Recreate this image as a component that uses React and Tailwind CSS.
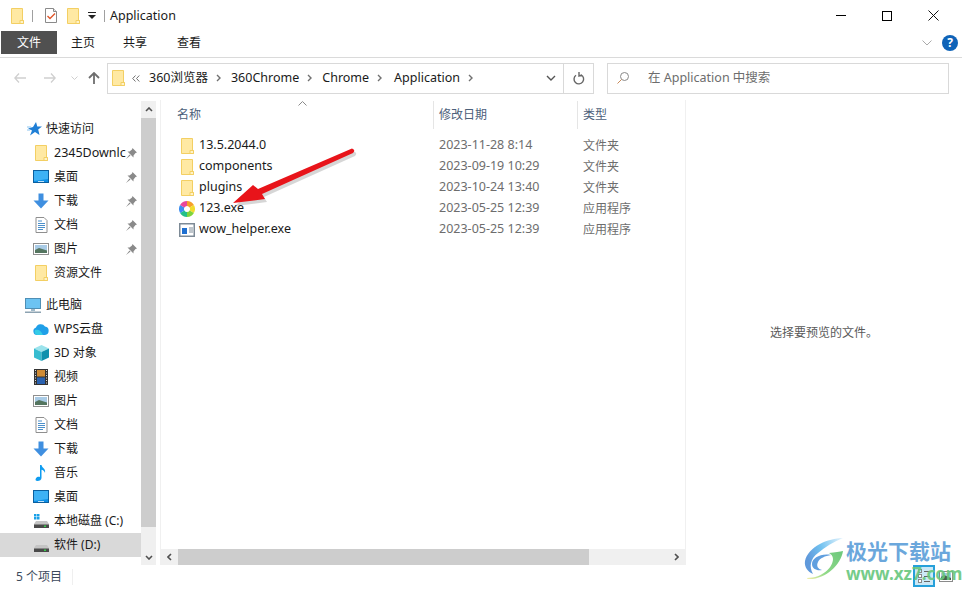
import React from 'react';

const FONT = '"Noto Sans", "Noto Sans CJK SC", sans-serif';

function FolderIcon({ className = 'w-[14px] h-[17px]' }) {
  return (
    <svg viewBox="0 0 13 16" className={className}>
      <path d="M.5.5h11v12h1v3H.5z" fill="#ffe9a3" stroke="#f3cf63" />
      <path d="M9 12.500h3.500v3H9z" fill="#fff3c8" stroke="#f3cf63" />
    </svg>
  );
}

function CheckDoc() {
  return (
    <svg viewBox="0 0 14 17" className="w-[14px] h-[17px]">
      <path d="M1.500 1.500h8l3 3v11h-11z" fill="#fff" stroke="#8a8a8a" />
      <path d="M9.500 1.500v3h3" fill="#e8e8e8" stroke="#8a8a8a" />
      <path d="M3.500 9l2.500 2.500 5-5" fill="none" stroke="#e0562a" strokeWidth="1.400" />
    </svg>
  );
}

function Monitor() {
  return (
    <svg viewBox="0 0 16 14" className="w-4 h-[14px]">
      <rect x="0.500" y="0.500" width="15" height="12" fill="#0d8fe6" stroke="#0b5f9e" />
      <path d="M1 1h14v8L1 11z" fill="#3eb2f5" />
      <rect x="5" y="11" width="6" height="1" fill="#bfe3fa" />
    </svg>
  );
}

function DownArrow() {
  return (
    <svg viewBox="0 0 16 16" className="w-4 h-4">
      <path d="M5.500 0.500h5v7h5L8 15.500 0.500 7.500h5z" fill="#3f8fe0" />
    </svg>
  );
}

function DocIcon() {
  return (
    <svg viewBox="0 0 13 16" className="w-[13px] h-4">
      <path d="M1 .5h8l3 3v12H1z" fill="#fff" stroke="#8f8f8f" />
      <path d="M3 4h4M3 6.500h7M3 8.500h7M3 10.500h7M3 12.500h5" stroke="#4b8fca" />
    </svg>
  );
}

function PictureIcon() {
  return (
    <svg viewBox="0 0 16 12" className="w-4 h-3">
      <rect x=".5" y=".5" width="15" height="11" fill="#fff" stroke="#8f8f8f" />
      <rect x="2" y="2" width="12" height="8" fill="#a9cbe6" />
      <path d="M2 7l4-2 8 2.500V10H2z" fill="#54755f" />
    </svg>
  );
}

function FilmIcon() {
  return (
    <svg viewBox="0 0 14 16" className="w-[14px] h-4">
      <rect width="14" height="16" fill="#333" />
      <rect x="3" y="1" width="8" height="6.500" fill="#cf8b35" />
      <rect x="3" y="8.500" width="8" height="6.500" fill="#2a62b0" />
      <path d="M1 1.500h1M1 4h1M1 6.500h1M1 9h1M1 11.500h1M1 14h1M12 1.500h1M12 4h1M12 6.500h1M12 9h1M12 11.500h1M12 14h1" stroke="#ddd" />
    </svg>
  );
}

function MusicIcon() {
  return (
    <svg viewBox="0 0 12 16" className="w-3 h-4">
      <path d="M5 0h1.500c.5 3 4.500 3.500 3.500 8-.5-2-2-3-3.500-3.300V13c0 2-2 3-4 3S0 14.500 1 13.200 3.500 11.500 5 12z" fill="#0e9cf0" />
    </svg>
  );
}

function DriveIcon({ win }) {
  return (
    <svg viewBox="0 0 15 14" className="w-[15px] h-[14px]">
      {win && <path d="M0 0h2.500v2.500H0zM3 0h2.500v2.500H3zM0 3h2.500v2.500H0zM3 3h2.500v2.500H3z" fill="#19a0e8" />}
      <path d="M2 7h11l2 3v4H0v-4z" fill="#c4c4c4" />
      <rect y="10.500" width="15" height="3.500" fill="#4a4a4a" />
      <rect x="10" y="11.500" width="2" height="1.500" fill="#35d04a" />
    </svg>
  );
}

function CloudIcon() {
  return (
    <svg viewBox="0 0 16 12" className="w-4 h-3">
      <path d="M4 12a3.800 3.800 0 0 1-1-7.400A5 5 0 0 1 12 3.500 4.300 4.300 0 0 1 12 12z" fill="#1f9fe8" />
      <path d="M2 7c3-1 6 0 8 5H4a3.800 3.800 0 0 1-2-5z" fill="#35cbe6" />
    </svg>
  );
}

function CubeIcon() {
  return (
    <svg viewBox="0 0 15 16" className="w-[15px] h-4">
      <path d="M7.500 0L15 3.500 7.500 7 0 3.500z" fill="#9be3ec" />
      <path d="M0 3.500L7.500 7v9L0 12.500z" fill="#37bcd0" />
      <path d="M15 3.500L7.500 7v9l7.500-3.500z" fill="#1090ad" />
    </svg>
  );
}

function Pin() {
  return (
    <svg viewBox="0 0 11 11" className="w-[11px] h-[11px] shrink-0">
      <path d="M6.500 0L11 4.500 9.500 5 7.500 7.500 7.500 9.500 1.500 3.500 3.500 3.500 6 1.500zM3.500 6.500L0 11l4.500-3.500z" fill="#8a8a8a" />
    </svg>
  );
}

function StarIcon() {
  return (
    <svg viewBox="0 0 15 14" className="w-[15px] h-[14px]">
      <path d="M9 0l1.300 4.500H15l-3.800 3 1.300 5.500L8 10 3 13.500 5 8.500 1 6.500 6 5z" fill="#1f7fd6" />
      <path d="M0 5h4M0 8h3" stroke="#8cc4ef" />
    </svg>
  );
}

function ComputerIcon() {
  return (
    <svg viewBox="0 0 16 15" className="w-4 h-[15px]">
      <rect x=".5" y=".5" width="15" height="10" fill="#6cc3f2" stroke="#4f8fb5" />
      <rect x="6" y="11" width="4" height="2" fill="#9fb8c8" />
      <rect y="13.500" width="16" height="1.500" fill="#8da3b2" />
    </svg>
  );
}

const quickAccess = [
  { label: '2345Downlc', icon: <FolderIcon className="w-[13px] h-[16px]" />, pin: true, latin: true },
  { label: '桌面', icon: <Monitor />, pin: true },
  { label: '下载', icon: <DownArrow />, pin: true },
  { label: '文档', icon: <DocIcon />, pin: true },
  { label: '图片', icon: <PictureIcon />, pin: true },
  { label: '资源文件', icon: <FolderIcon className="w-[13px] h-[16px]" /> },
];

const thisPc = [
  { label: 'WPS云盘', icon: <CloudIcon /> },
  { label: '3D 对象', icon: <CubeIcon /> },
  { label: '视频', icon: <FilmIcon /> },
  { label: '图片', icon: <PictureIcon /> },
  { label: '文档', icon: <DocIcon /> },
  { label: '下载', icon: <DownArrow /> },
  { label: '音乐', icon: <MusicIcon /> },
  { label: '桌面', icon: <Monitor /> },
  { label: '本地磁盘 (C:)', icon: <DriveIcon win /> },
  { label: '软件 (D:)', icon: <DriveIcon />, selected: true },
];

const files = [
  { name: '13.5.2044.0', date: '2023-11-28 8:14', type: '文件夹', kind: 'folder' },
  { name: 'components', date: '2023-09-19 10:29', type: '文件夹', kind: 'folder' },
  { name: 'plugins', date: '2023-10-24 13:40', type: '文件夹', kind: 'folder' },
  { name: '123.exe', date: '2023-05-25 12:39', type: '应用程序', kind: 'color' },
  { name: 'wow_helper.exe', date: '2023-05-25 12:39', type: '应用程序', kind: 'app' },
];

function NavRow({ item }) {
  return (
    <div className={`h-6 flex items-center ${item.selected ? 'bg-[#d9d9d9]' : ''}`}>
      <div className="w-[33px] shrink-0" />
      <div className="w-[16px] flex justify-center shrink-0">{item.icon}</div>
      <div className={`ml-[5px] w-[72px] shrink-0 whitespace-nowrap overflow-hidden text-[#1a1a1a] ${item.latin ? 'text-[12.5px]' : 'text-[12px]'}`}>
        {item.label}
      </div>
      {item.pin && <Pin />}
    </div>
  );
}

function FileIcon({ kind }) {
  if (kind === 'folder') return <FolderIcon className="w-[13px] h-[16px]" />;
  if (kind === 'color') {
    return (
      <svg viewBox="0 0 16 16" className="w-4 h-4">
        <path d="M8 0a8 8 0 0 1 6.900 4L10.600 6.500A3 3 0 0 0 8 5z" fill="#f5a02a" />
        <path d="M14.900 4a8 8 0 0 1 0 8l-4.300-2.500a3 3 0 0 0 0-3z" fill="#f2dc2e" />
        <path d="M14.900 12A8 8 0 0 1 8 16v-5a3 3 0 0 0 2.600-1.500z" fill="#7fd43a" />
        <path d="M8 16a8 8 0 0 1-6.900-4l4.300-2.500A3 3 0 0 0 8 11z" fill="#22c08a" />
        <path d="M1.100 12a8 8 0 0 1 0-8l4.300 2.500a3 3 0 0 0 0 3z" fill="#3c8df0" />
        <path d="M1.100 4A8 8 0 0 1 8 0v5a3 3 0 0 0-2.600 1.500z" fill="#e8479c" />
      </svg>
    );
  }
  return (
    <svg viewBox="0 0 16 14" className="w-4 h-[14px]">
      <rect x=".75" y=".75" width="14.500" height="12.500" fill="#fff" stroke="#7d8a96" strokeWidth="1.500" />
      <rect x="3" y="5" width="5" height="6" fill="#1f6fd0" />
      <path d="M10 5h4M10 7h4M10 9h4" stroke="#7f8c98" />
    </svg>
  );
}

function Chevron({ className = '' }) {
  return (
    <svg viewBox="0 0 5 8" className={`w-[5px] h-2 shrink-0 ${className}`}>
      <path d="M1 1l3 3-3 3" fill="none" stroke="#707070" strokeWidth="1.400" />
    </svg>
  );
}

function ViewRow() {
  return (
    <div className="flex items-center gap-[2px]">
      <div className="w-[4px] h-[4px] border border-[#888] bg-white" />
      <div className="flex-1 border-t border-dashed border-[#666]" />
    </div>
  );
}

export default function App() {
  return (
    <div className="relative w-[962px] h-[589px] bg-white flex flex-col overflow-hidden text-[12px] text-[#1a1a1a]" style={{ fontFamily: FONT }}>
      {/* title bar */}
      <div className="h-[31px] flex items-center shrink-0">
        <div className="ml-[11px] flex items-center">
          <FolderIcon className="w-[13px] h-[16px]" />
          <div className="ml-[8px] w-px h-3 bg-[#a0a0a0]" />
          <div className="ml-[11px]"><CheckDoc /></div>
          <div className="ml-[9px]"><FolderIcon className="w-[13px] h-[16px]" /></div>
          <svg viewBox="0 0 8 7" className="ml-[8px] w-2 h-[7px]"><path d="M0 0h8v1H0zM0 3h8L4 7z" fill="#222" /></svg>
          <div className="ml-[8px] w-px h-3 bg-[#a0a0a0]" />
        </div>
        <span className="ml-[5px] pt-px text-[12.5px]">Application</span>
        <div className="ml-auto flex items-center">
          <div className="w-[46px] flex justify-center"><div className="w-[10px] h-px bg-black" /></div>
          <div className="w-[46px] flex justify-center"><div className="w-[10px] h-[10px] border border-black" /></div>
          <div className="w-[46px] flex justify-center mr-[6px]">
            <svg viewBox="0 0 11 11" className="w-[11px] h-[11px]"><path d="M.5.5l10 10M10.500.500l-10 10" stroke="#111" /></svg>
          </div>
        </div>
      </div>

      {/* ribbon tabs */}
      <div className="h-[27px] shrink-0 flex items-start border-b border-[#dadada] text-[12px]">
        <div className="ml-px w-[56px] h-[23px] pt-px bg-[#505050] text-white flex items-center justify-center">文件</div>
        <div className="w-[53px] ml-[-13px] pl-[27px] h-[23px] pt-px flex items-center whitespace-nowrap">主页</div>
        <div className="ml-[26px] w-[53px] h-[23px] pt-px flex items-center">共享</div>
        <div className="ml-px h-[23px] pt-px flex items-center">查看</div>
        <div className="ml-auto h-[23px] flex items-center mr-[4px]">
          <svg viewBox="0 0 10 6" className="w-[10px] h-[6px] mr-[10px]"><path d="M.5.5L5 5 9.500.5" fill="none" stroke="#aaa" /></svg>
          <div className="w-4 h-4 rounded-full bg-[#0f63b8] text-white text-[12px] font-bold flex items-center justify-center">?</div>
        </div>
      </div>

      {/* address row */}
      <div className="h-[42px] shrink-0 flex items-center pb-[2px]">
        <div className="w-[107px] shrink-0 flex items-center pl-[14px]">
          <svg viewBox="0 0 12 10" className="w-3 h-[10px]"><path d="M5 .5L.8 5 5 9.500M1 5h11" fill="none" stroke="#cfcfcf" strokeWidth="1.300" /></svg>
          <svg viewBox="0 0 12 10" className="ml-[18px] w-3 h-[10px]"><path d="M7 .5L11.200 5 7 9.500M11 5H0" fill="none" stroke="#cfcfcf" strokeWidth="1.300" /></svg>
          <svg viewBox="0 0 7 4" className="ml-[15px] w-[7px] h-1"><path d="M.5.5L3.500 3.500 6.500.5" fill="none" stroke="#cfcfcf" /></svg>
          <svg viewBox="0 0 12 12" className="ml-[10px] w-3 h-3"><path d="M6 12V1M1 6l5-5 5 5" fill="none" stroke="#6e6e6e" strokeWidth="1.800" /></svg>
        </div>
        <div className="w-[487px] h-[31px] border border-[#d9d9d9] flex items-center shrink-0 whitespace-nowrap">
          <div className="ml-[4px] flex"><FolderIcon className="w-[13px] h-[16px]" /></div>
          <svg viewBox="0 0 8 7" className="ml-[7px] w-2 h-[7px]"><path d="M3.500.5L.7 3.500l2.800 3M7.300.5L4.500 3.500l2.800 3" fill="none" stroke="#707070" /></svg>
          <span className="ml-[9px] text-[12.500px]">360浏览器</span>
          <Chevron className="ml-[8px]" />
          <span className="ml-[10px] text-[12.500px]">360Chrome</span>
          <Chevron className="ml-[8px]" />
          <span className="ml-[10px] text-[12.500px]">Chrome</span>
          <Chevron className="ml-[8px]" />
          <span className="ml-[12px] text-[12.500px]">Application</span>
          <Chevron className="ml-[8px]" />
          <div className="ml-auto flex items-center h-full">
            <svg viewBox="0 0 10 6" className="w-[10px] h-[6px] mr-[7px]"><path d="M1 1l4 4 4-4" fill="none" stroke="#555" strokeWidth="1.400" /></svg>
            <div className="w-[30px] h-full border-l border-[#d9d9d9] flex items-center justify-center">
              <svg viewBox="0 0 12 13" className="w-3 h-[13px]"><path d="M3 3.200a4.800 4.800 0 1 0 5-.4M6 0v4l3-1" fill="none" stroke="#666" strokeWidth="1.400" /></svg>
            </div>
          </div>
        </div>
        <div className="ml-[13px] w-[342px] h-[31px] border border-[#d9d9d9] flex items-center shrink-0">
          <svg viewBox="0 0 12 12" className="ml-[9px] w-3 h-3"><circle cx="7.500" cy="4.500" r="4" fill="none" stroke="#888" /><path d="M4.500 7.500L.5 11.500" stroke="#c98a5a" /></svg>
          <span className="ml-[19px] text-[#6d6d6d] text-[12.500px]">在 Application 中搜索</span>
        </div>
      </div>

      {/* body */}
      <div className="flex flex-1 min-h-0">
        {/* nav pane */}
        <div className="w-[141px] shrink-0 pt-[17px] overflow-hidden">
          <div className="h-6 flex items-center">
            <div className="w-[27px] shrink-0" />
            <StarIcon />
            <span className="ml-[4px]">快速访问</span>
          </div>
          {quickAccess.map(item => <NavRow key={item.label} item={item} />)}
          <div className="h-2" />
          <div className="h-6 flex items-center">
            <div className="w-[25px] shrink-0" />
            <ComputerIcon />
            <span className="ml-[5px]">此电脑</span>
          </div>
          {thisPc.map(item => <NavRow key={item.label} item={item} />)}
        </div>
        <div className="w-[15px] shrink-0 mt-px bg-[#f0f0f0] flex flex-col h-[464px]">
          <div className="h-[17px] flex items-center justify-center">
            <svg viewBox="0 0 8 5" className="w-2 h-[5px]"><path d="M1 4l3-3 3 3" fill="none" stroke="#505050" strokeWidth="1.600" /></svg>
          </div>
          <div className="h-[409px] bg-[#cdcdcd]" />
          <div className="mt-auto h-[16px] flex items-center justify-center">
            <svg viewBox="0 0 8 5" className="w-2 h-[5px]"><path d="M1 1l3 3 3-3" fill="none" stroke="#505050" strokeWidth="1.600" /></svg>
          </div>
        </div>

        {/* file list */}
        <div className="ml-[4px] w-[526px] shrink-0 h-[465px] flex flex-col border-l border-r border-[#f0f0f0] relative">
          <div className="mt-px h-[28px] grid grid-cols-[272px_144px_1fr] text-[#4c607a] relative">
            <div className="pl-[16px] flex items-center">名称</div>
            <div className="pl-[5px] flex items-center border-l border-[#e5e5e5]">修改日期</div>
            <div className="pl-[5px] flex items-center border-l border-[#e5e5e5]">类型</div>
            <svg viewBox="0 0 9 5" className="absolute left-[137px] top-0 w-[9px] h-[5px]"><path d="M.5 4.500L4.500.5l4 4" fill="none" stroke="#8a8a8a" /></svg>
          </div>
          <div className="pt-[6px]">
            {files.map(f => (
              <div key={f.name} className="h-[21px] grid grid-cols-[272px_144px_1fr] items-center">
                <div className="pl-[18px] flex items-center">
                  <div className="w-[16px] flex justify-center"><FileIcon kind={f.kind} /></div>
                  <span className="ml-[4px] text-[12.500px]">{f.name}</span>
                </div>
                <div className="pl-[6px] text-[#6d6d6d] text-[12.500px]">{f.date}</div>
                <div className="pl-[6px] text-[#6d6d6d]">{f.type}</div>
              </div>
            ))}
          </div>
          {/* horizontal scrollbar */}
          <div className="mt-auto h-[16px] flex bg-[#f0f0f0] items-center">
            <div className="w-[17px] flex justify-center">
              <svg viewBox="0 0 5 8" className="w-[5px] h-2"><path d="M4 1L1 4l3 3" fill="none" stroke="#505050" strokeWidth="1.600" /></svg>
            </div>
            <div className="w-[411px] h-full bg-[#cdcdcd]" />
            <div className="ml-auto w-[17px] flex justify-center">
              <svg viewBox="0 0 5 8" className="w-[5px] h-2"><path d="M1 1l3 3-3 3" fill="none" stroke="#505050" strokeWidth="1.600" /></svg>
            </div>
          </div>
        </div>

        {/* preview */}
        <div className="flex-1 flex justify-center pt-[224px] text-[#5a5a5a]">
          选择要预览的文件。
        </div>
      </div>

      {/* status bar */}
      <div className="h-[24px] shrink-0 flex items-center pl-[16px] text-[#3c4a5c]">
        <span>5 个项目</span>
        <div className="ml-[10px] w-px h-[16px] bg-[#efefef]" />
        <div className="ml-auto mr-[9px] mb-[2px] flex items-center">
          <div className="w-[22px] h-[22px] border-2 border-[#26a0da] bg-[#cbe8f6] flex flex-col justify-center gap-px px-[3px]">
            <ViewRow />
            <ViewRow />
            <ViewRow />
          </div>
          <svg viewBox="0 0 14 11" className="ml-[4px] w-[14px] h-[11px]">
            <rect x=".5" y=".5" width="13" height="10" fill="#fff" stroke="#8a8a8a" />
            <rect x="2" y="2" width="10" height="7" fill="#a9cbe6" />
            <path d="M2 6l3-2 7 3v2H2z" fill="#46604d" />
          </svg>
        </div>
      </div>

      {/* red arrow annotation */}
      <svg viewBox="0 0 962 589" className="absolute left-0 top-0 w-[962px] h-[589px] pointer-events-none">
        <path d="M352 148.500Q356 150 353 153L262 194 265 199 233 203 253 185 258 189z" fill="#000" opacity=".16" transform="translate(2 3)" />
        <path d="M352 148.500Q356 150 353 153L262 194 265 199 233 203 253 185 258 189z" fill="#e8141a" />
      </svg>

      {/* watermark */}
      <div className="absolute left-[803px] top-[537px] flex items-start opacity-90 pointer-events-none">
        <svg viewBox="0 0 44 44" className="w-[44px] h-[44px]">
          <defs>
            <linearGradient id="wmTop" x1="1" y1="0" x2="0" y2="0.300">
              <stop offset="0" stopColor="#e8f5fd" />
              <stop offset="0.600" stopColor="#63bcef" />
              <stop offset="1" stopColor="#4f8fd8" />
            </linearGradient>
            <linearGradient id="wmLow" x1="1" y1="0" x2="0" y2="1">
              <stop offset="0" stopColor="#5cc26f" />
              <stop offset="0.650" stopColor="#85d67c" />
              <stop offset="1" stopColor="#f4eda0" />
            </linearGradient>
          </defs>
          <path d="M40 1C25 1 5 10 2 24C1 30 5 35 10 37C6 30 7 22 15 16C22 10 30 5 40 1z" fill="url(#wmTop)" />
          <path d="M28 18C18 16 9 21 9 27C9 32 14 34 19 33C15 32 13 29 15 25C17 21 22 19 28 18z" fill="#4f95dc" />
          <path d="M40 14C38 28 22 43 5 42C4 42 4 41 4 41C20 41 30 30 30 22C30 19 28 17 26 16C32 15 37 15 40 14z" fill="url(#wmLow)" />
        </svg>
        <div className="ml-[-1px] mt-px whitespace-nowrap">
          <div className="text-[21px] font-bold leading-[26px] text-[#5b9ed9]">极光下载站</div>
          <div className="text-[17px] font-bold leading-[20px] text-[#67c77d]">www.xz7.com</div>
        </div>
      </div>
    </div>
  );
}
